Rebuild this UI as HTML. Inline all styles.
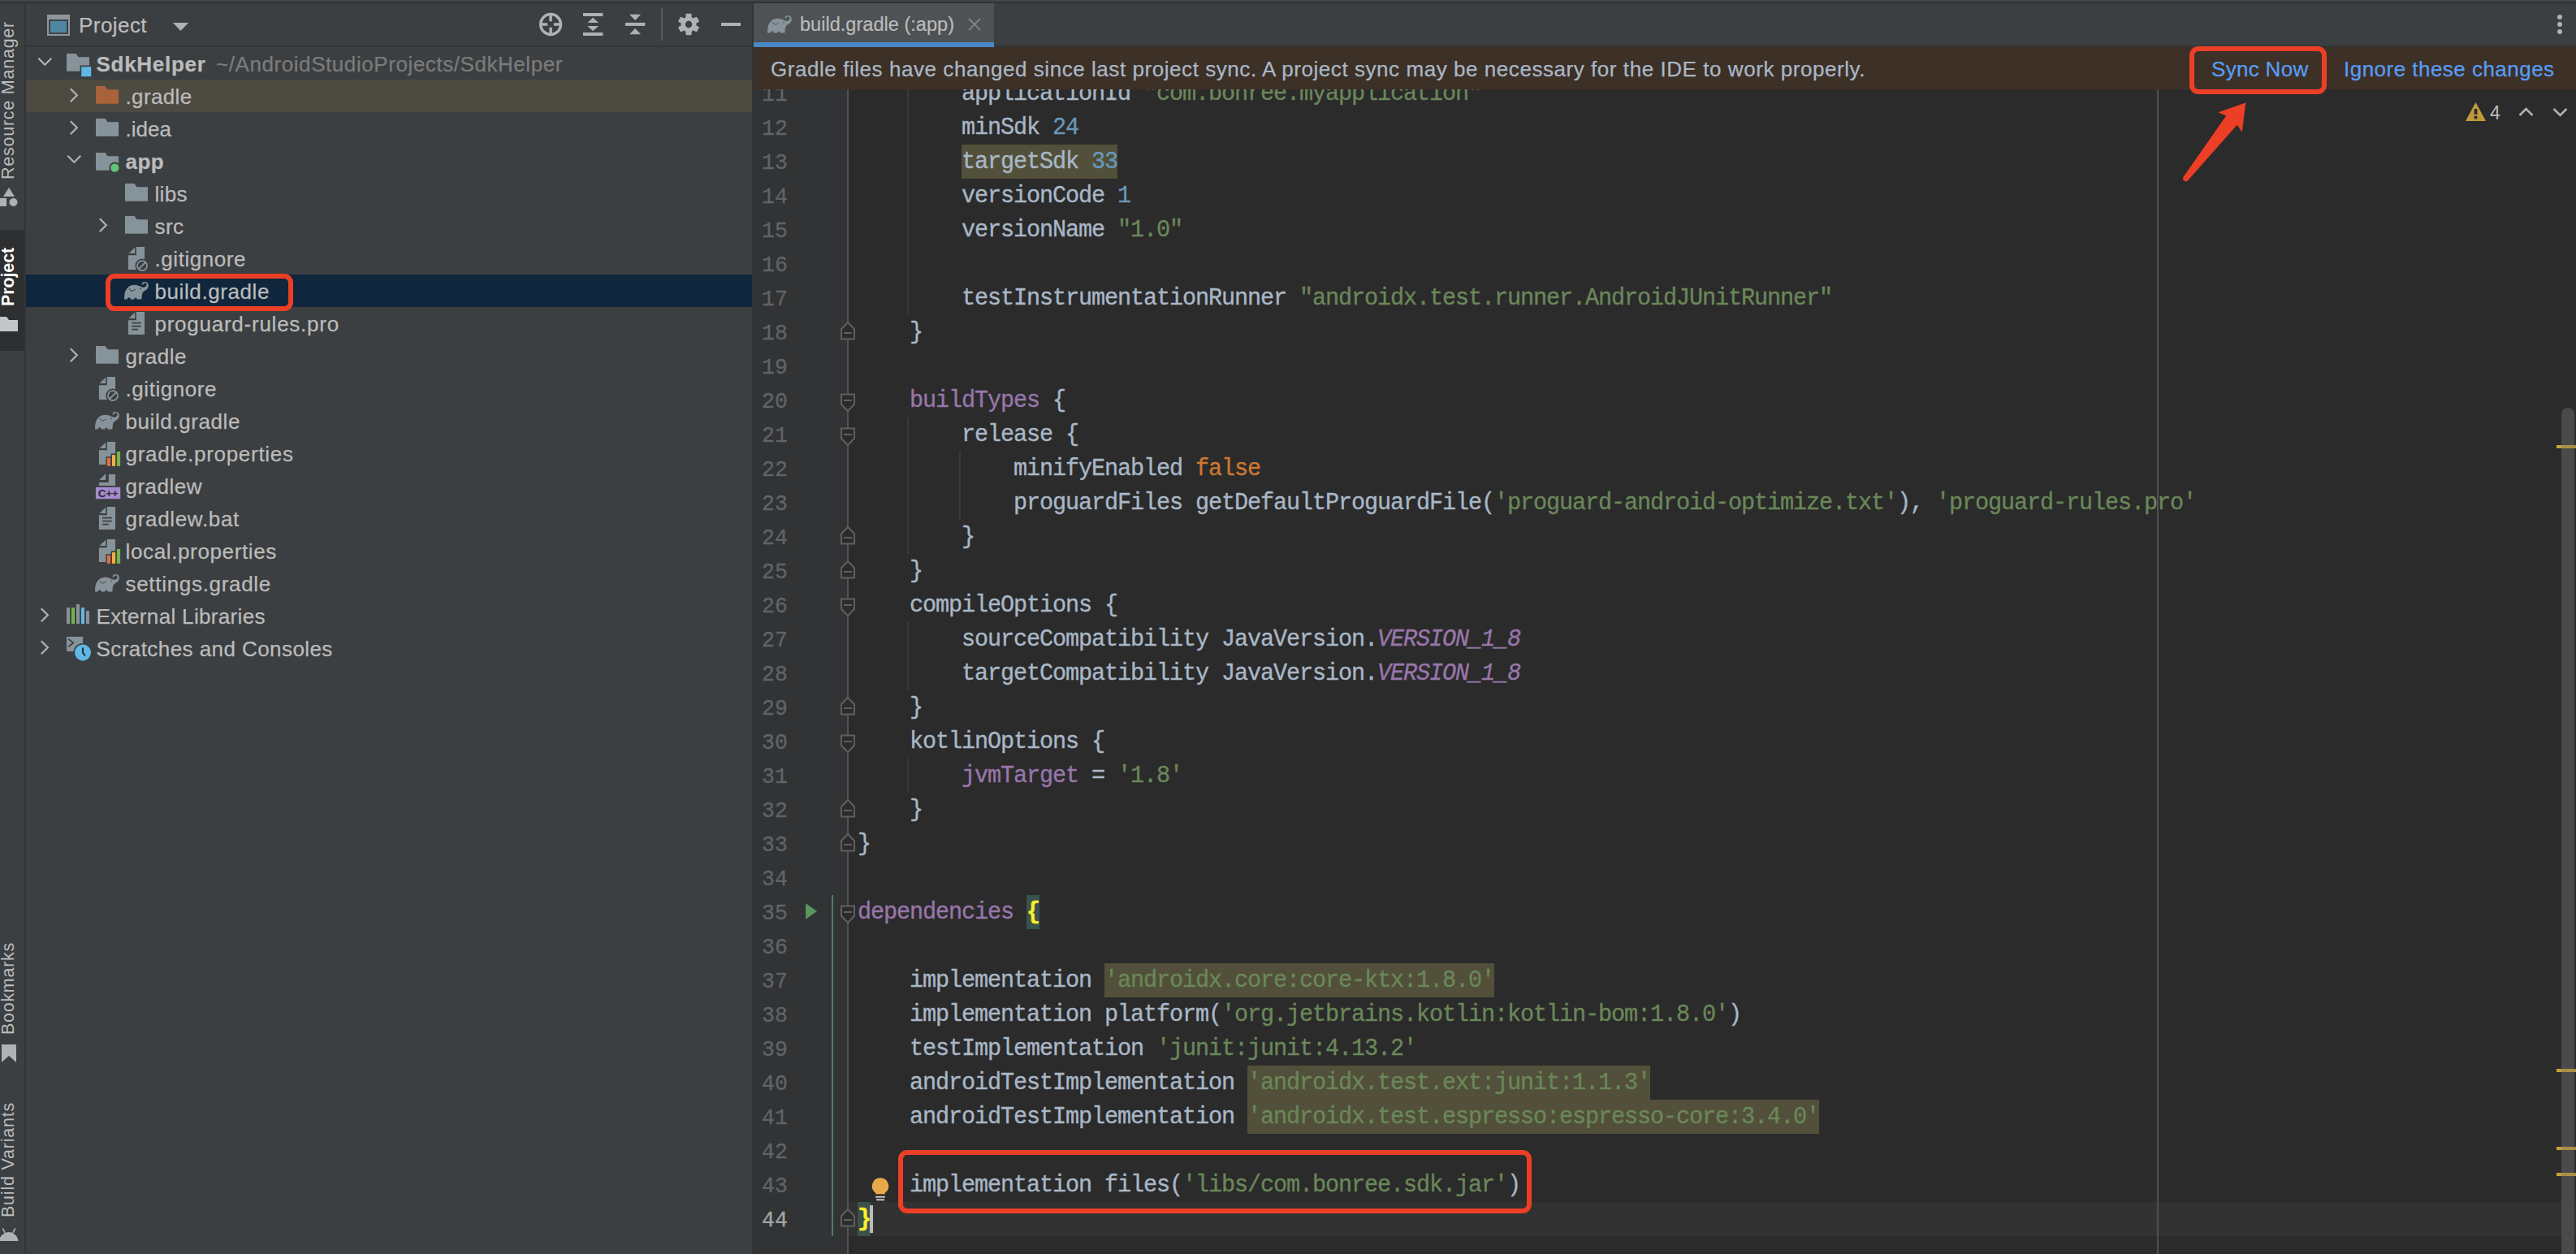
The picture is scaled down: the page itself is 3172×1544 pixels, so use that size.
<!DOCTYPE html><html><head><meta charset="utf-8"><title>build.gradle</title>
<style>
html,body{margin:0;padding:0}
body{width:3172px;height:1544px;position:relative;overflow:hidden;background:#3c3f41;font-family:"Liberation Sans",sans-serif;font-size:26px;color:#bbbbbb}
.a{position:absolute}
svg{display:block}
#topline{left:0;top:0;width:3172px;height:2px;background:#434547}
#topline2{left:0;top:2px;width:3172px;height:2px;background:#2f3133}
/* left strip */
#strip{left:0;top:3px;width:30px;height:1541px;background:#3c3f41}
#stripb{left:30px;top:3px;width:2px;height:1541px;background:#323436}
.vt{position:absolute;left:0;width:30px;white-space:nowrap;font-size:21.500px;color:#bbbbbb}
.vt span{position:absolute;left:-5px;top:0;transform-origin:0 0;transform:rotate(-90deg);line-height:30px;height:30px;display:block}
/* project panel */
#panel{left:32px;top:3px;width:894px;height:1541px;background:#3c3f41}
#phead{left:32px;top:3px;width:894px;height:53px}
#pheadb{left:32px;top:56px;width:894px;height:2px;background:#323436}
.row{position:absolute;left:32px;width:894px;height:40px}
.row.excl{background:#4c4a41}
.row.sel{background:#10263c}
.row .tx{top:1px;line-height:40px;white-space:nowrap;color:#bbbbbb;-webkit-text-stroke:0.250px currentColor}
.row .tx.b{font-weight:bold}
.row .tx.g{color:#7b7b7b}
.row .icw{top:0;height:40px;width:28px;display:flex;align-items:center;justify-content:flex-start}
.ic{flex:none}
/* divider */
#divider{left:926px;top:3px;width:2px;height:1541px;background:#323436}
/* editor */
#tabbar{left:928px;top:3px;width:2244px;height:53px;background:#3c3f41}
#tabbarb{left:928px;top:56px;width:2244px;height:2px;background:#323436}
#tab{left:928px;top:3px;width:296px;height:49px;background:#4e5254}
#tabu{left:928px;top:52px;width:296px;height:6px;background:#4a88c7}
#tabtx{left:985px;top:5px;line-height:50px;font-size:23.500px;white-space:nowrap;color:#bbbbbb;-webkit-text-stroke:0.200px currentColor}
#editor{left:928px;top:58px;width:2244px;height:1486px;background:#2b2b2b;overflow:hidden}
#gutter{left:928px;top:58px;width:116px;height:1486px;background:#313335}
#foldline{left:1043px;top:58px;width:2px;height:1486px;background:#525252}
#curline{left:1045px;top:1480px;width:2127px;height:42px;background:#323232}
#vcs{left:1024px;top:1102px;width:2px;height:420px;background:#52796b}
#margin{left:2656px;top:110px;width:2px;height:1434px;background:#4f4f4f}
.ln{position:absolute;left:928px;width:42px;height:42px;line-height:42px;text-align:right;font-family:"Liberation Mono",monospace;font-size:26.500px;letter-spacing:0.100px;color:#606366;white-space:pre;transform-origin:0 28px;transform:translateY(2.400px) scaleY(1.05);-webkit-text-stroke:0.350px currentColor}
.ln.cur{color:#a4a3a3}
.cl{position:absolute;left:1056px;height:42px;line-height:42px;font-family:"Liberation Mono",monospace;font-size:28.500px;letter-spacing:-1.103px;color:#a9b7c6;white-space:pre;transform-origin:0 28.600px;transform:translateY(1.400px) scaleY(1.05);-webkit-text-stroke:0.350px currentColor}
.s{color:#6a8759}.n{color:#6897bb}.k{color:#cc7832}.p{color:#9876aa}.pi{color:#9876aa;font-style:italic}
.y{color:#ffef28;font-weight:bold}
.yb{position:absolute;height:42px;background:#3b514d}
.hlb{position:absolute;height:42px;background:#52503a}
.guide{position:absolute;width:2px;background:#393939}
#notif{left:928px;top:58px;width:2244px;height:52px;background:#3d3026}
#notiftx{left:949px;top:59px;line-height:52px;white-space:nowrap;color:#a9b7c6;-webkit-text-stroke:0.250px currentColor}
.link{color:#589df6;white-space:nowrap;line-height:52px;top:59px;-webkit-text-stroke:0.250px currentColor}
.redbox{position:absolute;border:6px solid #ec3f25;border-radius:11px;box-sizing:border-box}
#scroll{left:3154px;top:502px;width:16px;height:1060px;border-radius:8px;background:#4a4a4a}
.mark{position:absolute;left:3148px;width:24px;height:4px;background:#a68f47}
.mark i{position:absolute;left:0;top:0;width:6px;height:4px;background:#c9a136}
#warn4{left:3066px;top:124px;font-size:23px;line-height:30px;color:#bbbbbb}

</style></head>
<body>
<div class="a" id="panel"></div>
<div class="a" id="phead"></div>
<div class="a" id="pheadb"></div>
<div class="row" style="top:58px">
<svg class="a" style="left:14.4px;top:11.500px" width="19" height="12" viewBox="0 0 19 12"><path d="M1.300 1.800l8 8 8-8" stroke="#b1b1b1" stroke-width="2.200" fill="none"></path></svg>
<svg class="a" style="left:50px;top:8px" width="31" height="29" viewBox="0 0 31 29"><path d="M0 0H11.5L14.6 4.3H28V14.5H16.500V21.700H0z" fill="#87939a"></path><rect x="18.200" y="16.200" width="12" height="12" fill="#5fb8e6"></rect></svg>
<span class="a tx b" style="left: 86.5px; letter-spacing: 0.71px;">SdkHelper</span>
<span class="a tx g" style="left: 234px; letter-spacing: 0.567px;">~/AndroidStudioProjects/SdkHelper</span>
</div>
<div class="row excl" style="top:98px">
<svg class="a" style="left:53px;top:9.500px" width="12" height="19" viewBox="0 0 12 19"><path d="M1.800 1.300l8 8-8 8" stroke="#b1b1b1" stroke-width="2.200" fill="none"></path></svg>
<svg class="a" style="left:86px;top:8.4px" width="28" height="22" viewBox="0 0 28 22"><path d="M0 0H11.5L14.6 4.3H28V21.700H0z" fill="#a9623a"></path></svg>
<span class="a tx" style="left: 122.5px; letter-spacing: 0.357px;">.gradle</span>
</div>
<div class="row" style="top:138px">
<svg class="a" style="left:53px;top:9.500px" width="12" height="19" viewBox="0 0 12 19"><path d="M1.800 1.300l8 8-8 8" stroke="#b1b1b1" stroke-width="2.200" fill="none"></path></svg>
<svg class="a" style="left:86px;top:8.4px" width="28" height="22" viewBox="0 0 28 22"><path d="M0 0H11.5L14.6 4.3H28V21.700H0z" fill="#87939a"></path></svg>
<span class="a tx" style="left: 122.5px; letter-spacing: 0.022px;">.idea</span>
</div>
<div class="row" style="top:178px">
<svg class="a" style="left:50.4px;top:11.500px" width="19" height="12" viewBox="0 0 19 12"><path d="M1.300 1.800l8 8 8-8" stroke="#b1b1b1" stroke-width="2.200" fill="none"></path></svg>
<svg class="a" style="left:85.8px;top:10.2px" width="31" height="27" viewBox="0 0 31 27"><path d="M0 0H11.5L14.6 4.3H28V21.700H0z" fill="#87939a"></path><circle cx="23.300" cy="18.600" r="7" fill="#3c3f41"></circle><circle cx="23.300" cy="18.600" r="5.200" fill="#62c277"></circle></svg>
<span class="a tx b" style="left: 122.5px; letter-spacing: 0.422px;">app</span>
</div>
<div class="row" style="top:218px">
<svg class="a" style="left:122px;top:8.4px" width="28" height="22" viewBox="0 0 28 22"><path d="M0 0H11.5L14.6 4.3H28V21.700H0z" fill="#87939a"></path></svg>
<span class="a tx" style="left: 158.5px; letter-spacing: 0.346px;">libs</span>
</div>
<div class="row" style="top:258px">
<svg class="a" style="left:89px;top:9.500px" width="12" height="19" viewBox="0 0 12 19"><path d="M1.800 1.300l8 8-8 8" stroke="#b1b1b1" stroke-width="2.200" fill="none"></path></svg>
<svg class="a" style="left:122px;top:8.4px" width="28" height="22" viewBox="0 0 28 22"><path d="M0 0H11.5L14.6 4.3H28V21.700H0z" fill="#87939a"></path></svg>
<span class="a tx" style="left: 158.5px; letter-spacing: 0.443px;">src</span>
</div>
<div class="row" style="top:298px">
<svg class="a" style="left:122px;top:5px" width="31" height="34" viewBox="0 0 31 34"><path d="M13.8 1.1H24V28.9H3.9V11.2H13.8z" fill="#87939a"></path><path d="M12.1 1.700V9H4.500z" fill="#87939a"></path><circle cx="21" cy="24.100" r="8.600" fill="#3c3f41"></circle><circle cx="21" cy="24.100" r="6" fill="none" stroke="#87939a" stroke-width="1.800"></circle><path d="M16.900 28.200L25.100 20" stroke="#87939a" stroke-width="1.800"></path></svg>
<span class="a tx" style="left: 158.5px; letter-spacing: 0.563px;">.gitignore</span>
</div>
<div class="row sel" style="top:338px">
<svg class="a" style="left:121.1px;top:8.8px" width="31" height="23" viewBox="0 0 31 23"><path d="M0 21.6Q0 15.8 0.7 13.4Q1.4 11 2.85 8.85Q4.3 6.7 6.2 5.5Q8.1 4.3 10.3 3.9Q12.5 3.5 14.85 3.9Q17.2 4.3 18.9 5.15Q20.6 6 22.25 6.45Q23.9 6.9 25.2 6.45Q26.5 6 27.15 5.05Q27.8 4.1 27.55 3.15Q27.3 2.2 26.45 1.7Q25.6 1.2 24.75 1.45Q23.9 1.7 23.6 2.45Q23.3 3.2 22.8 3.55Q22.3 3.9 21.8 3.35Q21.3 2.8 21.75 1.8Q22.2 0.8 23.55 0.3Q24.9 -0.2 26.5 0.15Q28.1 0.5 29 1.85Q29.9 3.2 29.8 4.95Q29.7 6.7 28.6 8.3Q27.5 9.9 25.7 10.85Q23.9 11.8 23.1 12.85Q22.3 13.9 21.95 15.8Q21.6 17.7 21.5 19.65L21.4 21.6H15.6A1.6 2 0 0 0 12.4 21.6H7.7A1.95 2.400 0 0 0 3.8 21.6Z" fill="#87939a"></path><circle cx="19.9" cy="8.6" r=".75" fill="#10263c"></circle><path d="M6.2 8.1Q7.6 11.8 9.6 11.2T13.7 9.100" stroke="#10263c" stroke-width=".9" fill="none"></path></svg>
<span class="a tx" style="left: 158.5px; letter-spacing: 0.589px;">build.gradle</span>
</div>
<div class="row" style="top:378px">
<svg class="a" style="left:122px;top:5px" width="28" height="30" viewBox="0 0 28 30"><path d="M13.8 1.1H24V28.9H3.9V11.2H13.8z" fill="#87939a"></path><path d="M12.1 1.700V9H4.500z" fill="#87939a"></path><path d="M8.200 14.700H19.700M8.200 18.700H19.700M8.200 22.700H15.900" stroke="#3c3f41" stroke-width="1.700"></path></svg>
<span class="a tx" style="left: 158.5px; letter-spacing: 0.751px;">proguard-rules.pro</span>
</div>
<div class="row" style="top:418px">
<svg class="a" style="left:53px;top:9.500px" width="12" height="19" viewBox="0 0 12 19"><path d="M1.800 1.300l8 8-8 8" stroke="#b1b1b1" stroke-width="2.200" fill="none"></path></svg>
<svg class="a" style="left:86px;top:8.4px" width="28" height="22" viewBox="0 0 28 22"><path d="M0 0H11.5L14.6 4.3H28V21.700H0z" fill="#87939a"></path></svg>
<span class="a tx" style="left: 122.5px; letter-spacing: 0.536px;">gradle</span>
</div>
<div class="row" style="top:458px">
<svg class="a" style="left:86px;top:5px" width="31" height="34" viewBox="0 0 31 34"><path d="M13.8 1.1H24V28.9H3.9V11.2H13.8z" fill="#87939a"></path><path d="M12.1 1.700V9H4.500z" fill="#87939a"></path><circle cx="21" cy="24.100" r="8.600" fill="#3c3f41"></circle><circle cx="21" cy="24.100" r="6" fill="none" stroke="#87939a" stroke-width="1.800"></circle><path d="M16.900 28.200L25.100 20" stroke="#87939a" stroke-width="1.800"></path></svg>
<span class="a tx" style="left: 122.5px; letter-spacing: 0.563px;">.gitignore</span>
</div>
<div class="row" style="top:498px">
<svg class="a" style="left:85.1px;top:8.8px" width="31" height="23" viewBox="0 0 31 23"><path d="M0 21.6Q0 15.8 0.7 13.4Q1.4 11 2.85 8.85Q4.3 6.7 6.2 5.5Q8.1 4.3 10.3 3.9Q12.5 3.5 14.85 3.9Q17.2 4.3 18.9 5.15Q20.6 6 22.25 6.45Q23.9 6.9 25.2 6.45Q26.5 6 27.15 5.05Q27.8 4.1 27.55 3.15Q27.3 2.2 26.45 1.7Q25.6 1.2 24.75 1.45Q23.9 1.7 23.6 2.45Q23.3 3.2 22.8 3.55Q22.3 3.9 21.8 3.35Q21.3 2.8 21.75 1.8Q22.2 0.8 23.55 0.3Q24.9 -0.2 26.5 0.15Q28.1 0.5 29 1.85Q29.9 3.2 29.8 4.95Q29.7 6.7 28.6 8.3Q27.5 9.9 25.7 10.85Q23.9 11.8 23.1 12.85Q22.3 13.9 21.95 15.8Q21.6 17.7 21.5 19.65L21.4 21.6H15.6A1.6 2 0 0 0 12.4 21.6H7.7A1.95 2.400 0 0 0 3.8 21.6Z" fill="#87939a"></path><circle cx="19.9" cy="8.6" r=".75" fill="#3c3f41"></circle><path d="M6.2 8.1Q7.6 11.8 9.6 11.2T13.7 9.100" stroke="#3c3f41" stroke-width=".9" fill="none"></path></svg>
<span class="a tx" style="left: 122.5px; letter-spacing: 0.589px;">build.gradle</span>
</div>
<div class="row" style="top:538px">
<svg class="a" style="left:86px;top:5px" width="31" height="32" viewBox="0 0 31 32"><path d="M13.8 1.1H24V15.500H18.500V19.300H12.300V28.900H3.900V11.2H13.8z" fill="#87939a"></path><path d="M12.1 1.700V9H4.500z" fill="#87939a"></path><path d="M12.300 28.900V19.300H18.500V15.500H24V13.500" fill="none"></path><rect x="12.300" y="19" width="6" height="10" fill="#87939a" opacity="0"></rect><rect x="13.800" y="20.800" width="4.300" height="10.100" fill="#e0703a"></rect><rect x="20" y="17.100" width="4.100" height="13.800" fill="#eeb04a"></rect><rect x="25.900" y="13" width="4.200" height="17.900" fill="#72b54c"></rect></svg>
<span class="a tx" style="left: 122.5px; letter-spacing: 0.71px;">gradle.properties</span>
</div>
<div class="row" style="top:578px">
<svg class="a" style="left:88px;top:5.8px" width="34" height="31" viewBox="0 0 34 31" overflow="visible"><path d="M13.800 0H22V14H2.100V10H13.800z" fill="#87939a"></path><path d="M12.100 .5V8.300H4.300z" fill="#87939a" transform="translate(-2 -1.200)"></path><rect x="-2.100" y="15.900" width="30.300" height="14.300" fill="#a48bd0"></rect><text x="13" y="27.600" font-family="Liberation Sans" font-weight="bold" font-size="13.500" fill="#2b2b2b" text-anchor="middle" letter-spacing="-.3">C++</text></svg>
<span class="a tx" style="left: 122.5px; letter-spacing: 0.491px;">gradlew</span>
</div>
<div class="row" style="top:618px">
<svg class="a" style="left:86px;top:5px" width="28" height="30" viewBox="0 0 28 30"><path d="M13.8 1.1H24V28.9H3.9V11.2H13.8z" fill="#87939a"></path><path d="M12.1 1.700V9H4.500z" fill="#87939a"></path><path d="M8.200 14.700H19.700M8.200 18.700H19.700M8.200 22.700H15.900" stroke="#3c3f41" stroke-width="1.700"></path></svg>
<span class="a tx" style="left: 122.5px; letter-spacing: 0.683px;">gradlew.bat</span>
</div>
<div class="row" style="top:658px">
<svg class="a" style="left:86px;top:5px" width="31" height="32" viewBox="0 0 31 32"><path d="M13.8 1.1H24V15.500H18.500V19.300H12.300V28.900H3.900V11.2H13.8z" fill="#87939a"></path><path d="M12.1 1.700V9H4.500z" fill="#87939a"></path><path d="M12.300 28.900V19.300H18.500V15.500H24V13.500" fill="none"></path><rect x="12.300" y="19" width="6" height="10" fill="#87939a" opacity="0"></rect><rect x="13.800" y="20.800" width="4.300" height="10.100" fill="#e0703a"></rect><rect x="20" y="17.100" width="4.100" height="13.800" fill="#eeb04a"></rect><rect x="25.900" y="13" width="4.200" height="17.900" fill="#72b54c"></rect></svg>
<span class="a tx" style="left: 122.5px; letter-spacing: 0.637px;">local.properties</span>
</div>
<div class="row" style="top:698px">
<svg class="a" style="left:85.1px;top:8.8px" width="31" height="23" viewBox="0 0 31 23"><path d="M0 21.6Q0 15.8 0.7 13.4Q1.4 11 2.85 8.85Q4.3 6.7 6.2 5.5Q8.1 4.3 10.3 3.9Q12.5 3.5 14.85 3.9Q17.2 4.3 18.9 5.15Q20.6 6 22.25 6.45Q23.9 6.9 25.2 6.45Q26.5 6 27.15 5.05Q27.8 4.1 27.55 3.15Q27.3 2.2 26.45 1.7Q25.6 1.2 24.75 1.45Q23.9 1.7 23.6 2.45Q23.3 3.2 22.8 3.55Q22.3 3.9 21.8 3.35Q21.3 2.8 21.75 1.8Q22.2 0.8 23.55 0.3Q24.9 -0.2 26.5 0.15Q28.1 0.5 29 1.85Q29.9 3.2 29.8 4.95Q29.7 6.7 28.6 8.3Q27.5 9.9 25.7 10.85Q23.9 11.8 23.1 12.85Q22.3 13.9 21.95 15.8Q21.6 17.7 21.5 19.65L21.4 21.6H15.6A1.6 2 0 0 0 12.4 21.6H7.7A1.95 2.400 0 0 0 3.8 21.6Z" fill="#87939a"></path><circle cx="19.9" cy="8.6" r=".75" fill="#3c3f41"></circle><path d="M6.2 8.1Q7.6 11.8 9.6 11.2T13.7 9.100" stroke="#3c3f41" stroke-width=".9" fill="none"></path></svg>
<span class="a tx" style="left: 122.5px; letter-spacing: 0.693px;">settings.gradle</span>
</div>
<div class="row" style="top:738px">
<svg class="a" style="left:17px;top:9.500px" width="12" height="19" viewBox="0 0 12 19"><path d="M1.800 1.300l8 8-8 8" stroke="#b1b1b1" stroke-width="2.200" fill="none"></path></svg>
<svg class="a" style="left:50px;top:5.9px" width="28" height="24" viewBox="0 0 28 24"><rect x="0" y="4.200" width="4" height="19.800" fill="#87939a"></rect><rect x="5.900" y="4.200" width="4.100" height="19.800" fill="#72b54c"></rect><rect x="12" y="0" width="4" height="24" fill="#87939a"></rect><rect x="17.900" y="4.200" width="4.100" height="19.800" fill="#5fb8e6"></rect><rect x="24" y="8.100" width="4" height="15.900" fill="#87939a"></rect></svg>
<span class="a tx" style="left: 86.5px; letter-spacing: 0.333px;">External Libraries</span>
</div>
<div class="row" style="top:778px">
<svg class="a" style="left:17px;top:9.500px" width="12" height="19" viewBox="0 0 12 19"><path d="M1.800 1.300l8 8-8 8" stroke="#b1b1b1" stroke-width="2.200" fill="none"></path></svg>
<svg class="a" style="left:50px;top:6px" width="32" height="31" viewBox="0 0 32 31"><rect x="0" y="0" width="20.100" height="18" fill="#87939a"></rect><path d="M2.200 2.600L8.300 7.500L2.200 12.400" stroke="#3c3f41" stroke-width="1.700" fill="none"></path><circle cx="20" cy="19.500" r="11.600" fill="#3c3f41"></circle><circle cx="20" cy="19.500" r="10" fill="#5fb8e6"></circle><path d="M20 13.500V19.500L22.800 23.500" stroke="#2b2b2b" stroke-width="2" fill="none"></path></svg>
<span class="a tx" style="left: 86.5px; letter-spacing: 0.431px;">Scratches and Consoles</span>
</div>
<div class="a" id="strip"></div>
<div class="a" id="stripb"></div>
<div class="a" id="divider"></div>
<div class="a" id="tabbar"></div>
<div class="a" id="editor"></div>
<div class="a" id="gutter"></div>
<div class="a" id="curline"></div>
<div class="a" id="foldline"></div>
<div class="a" id="vcs"></div>
<div class="a" id="margin"></div>
<div class="guide" style="left:1117px;top:94px;height:294px"></div><div class="guide" style="left:1117px;top:514px;height:168px"></div><div class="guide" style="left:1181px;top:556px;height:84px"></div><div class="guide" style="left:1117px;top:766px;height:84px"></div><div class="guide" style="left:1117px;top:934px;height:42px"></div>
<div class="hlb" style="left:1184px;top:178px;width:192px"></div>
<div class="yb" style="left:1264px;top:1102px;width:16px"></div>
<div class="hlb" style="left:1360px;top:1186px;width:480px"></div>
<div class="hlb" style="left:1536px;top:1312px;width:496px"></div>
<div class="hlb" style="left:1536px;top:1354px;width:704px"></div>
<div class="yb" style="left:1056px;top:1480px;width:16px"></div>
<div class="ln" style="top:94px">11</div>
<div class="cl" style="top:94px">        applicationId <span class="s">"com.bonree.myapplication"</span></div>
<div class="ln" style="top:136px">12</div>
<div class="cl" style="top:136px">        minSdk <span class="n">24</span></div>
<div class="ln" style="top:178px">13</div>
<div class="cl" style="top:178px">        targetSdk <span class="n">33</span></div>
<div class="ln" style="top:220px">14</div>
<div class="cl" style="top:220px">        versionCode <span class="n">1</span></div>
<div class="ln" style="top:262px">15</div>
<div class="cl" style="top:262px">        versionName <span class="s">"1.0"</span></div>
<div class="ln" style="top:304px">16</div>
<div class="cl" style="top:304px"></div>
<div class="ln" style="top:346px">17</div>
<div class="cl" style="top:346px">        testInstrumentationRunner <span class="s">"androidx.test.runner.AndroidJUnitRunner"</span></div>
<div class="ln" style="top:388px">18</div>
<div class="cl" style="top:388px">    }</div>
<div class="ln" style="top:430px">19</div>
<div class="cl" style="top:430px"></div>
<div class="ln" style="top:472px">20</div>
<div class="cl" style="top:472px">    <span class="p">buildTypes</span> {</div>
<div class="ln" style="top:514px">21</div>
<div class="cl" style="top:514px">        release {</div>
<div class="ln" style="top:556px">22</div>
<div class="cl" style="top:556px">            minifyEnabled <span class="k">false</span></div>
<div class="ln" style="top:598px">23</div>
<div class="cl" style="top:598px">            proguardFiles getDefaultProguardFile(<span class="s">'proguard-android-optimize.txt'</span>), <span class="s">'proguard-rules.pro'</span></div>
<div class="ln" style="top:640px">24</div>
<div class="cl" style="top:640px">        }</div>
<div class="ln" style="top:682px">25</div>
<div class="cl" style="top:682px">    }</div>
<div class="ln" style="top:724px">26</div>
<div class="cl" style="top:724px">    compileOptions {</div>
<div class="ln" style="top:766px">27</div>
<div class="cl" style="top:766px">        sourceCompatibility JavaVersion.<span class="pi">VERSION_1_8</span></div>
<div class="ln" style="top:808px">28</div>
<div class="cl" style="top:808px">        targetCompatibility JavaVersion.<span class="pi">VERSION_1_8</span></div>
<div class="ln" style="top:850px">29</div>
<div class="cl" style="top:850px">    }</div>
<div class="ln" style="top:892px">30</div>
<div class="cl" style="top:892px">    kotlinOptions {</div>
<div class="ln" style="top:934px">31</div>
<div class="cl" style="top:934px">        <span class="p">jvmTarget</span> = <span class="s">'1.8'</span></div>
<div class="ln" style="top:976px">32</div>
<div class="cl" style="top:976px">    }</div>
<div class="ln" style="top:1018px">33</div>
<div class="cl" style="top:1018px">}</div>
<div class="ln" style="top:1060px">34</div>
<div class="cl" style="top:1060px"></div>
<div class="ln" style="top:1102px">35</div>
<div class="cl" style="top:1102px"><span class="p">dependencies</span> <span class="y">{</span></div>
<div class="ln" style="top:1144px">36</div>
<div class="cl" style="top:1144px"></div>
<div class="ln" style="top:1186px">37</div>
<div class="cl" style="top:1186px">    implementation <span class="s">'androidx.core:core-ktx:1.8.0'</span></div>
<div class="ln" style="top:1228px">38</div>
<div class="cl" style="top:1228px">    implementation platform(<span class="s">'org.jetbrains.kotlin:kotlin-bom:1.8.0'</span>)</div>
<div class="ln" style="top:1270px">39</div>
<div class="cl" style="top:1270px">    testImplementation <span class="s">'junit:junit:4.13.2'</span></div>
<div class="ln" style="top:1312px">40</div>
<div class="cl" style="top:1312px">    androidTestImplementation <span class="s">'androidx.test.ext:junit:1.1.3'</span></div>
<div class="ln" style="top:1354px">41</div>
<div class="cl" style="top:1354px">    androidTestImplementation <span class="s">'androidx.test.espresso:espresso-core:3.4.0'</span></div>
<div class="ln" style="top:1396px">42</div>
<div class="cl" style="top:1396px"></div>
<div class="ln" style="top:1438px">43</div>
<div class="cl" style="top:1438px">    implementation files(<span class="s">'libs/com.bonree.sdk.jar'</span>)</div>
<div class="ln cur" style="top:1480px">44</div>
<div class="cl" style="top:1480px"><span class="y">}</span></div>
<svg class="a" style="left:1034px;top:395px" width="20" height="24" viewBox="0 0 20 24"><path d="M2 22.500v-12.300l8-8.200 8 8.200v12.300z" fill="#2b2b2b" stroke="#5f5f5f" stroke-width="2"></path><path d="M5 15h10" stroke="#5f5f5f" stroke-width="2"></path></svg><svg class="a" style="left:1034px;top:647px" width="20" height="24" viewBox="0 0 20 24"><path d="M2 22.500v-12.300l8-8.200 8 8.200v12.300z" fill="#2b2b2b" stroke="#5f5f5f" stroke-width="2"></path><path d="M5 15h10" stroke="#5f5f5f" stroke-width="2"></path></svg><svg class="a" style="left:1034px;top:689px" width="20" height="24" viewBox="0 0 20 24"><path d="M2 22.500v-12.300l8-8.200 8 8.200v12.300z" fill="#2b2b2b" stroke="#5f5f5f" stroke-width="2"></path><path d="M5 15h10" stroke="#5f5f5f" stroke-width="2"></path></svg><svg class="a" style="left:1034px;top:857px" width="20" height="24" viewBox="0 0 20 24"><path d="M2 22.500v-12.300l8-8.200 8 8.200v12.300z" fill="#2b2b2b" stroke="#5f5f5f" stroke-width="2"></path><path d="M5 15h10" stroke="#5f5f5f" stroke-width="2"></path></svg><svg class="a" style="left:1034px;top:983px" width="20" height="24" viewBox="0 0 20 24"><path d="M2 22.500v-12.300l8-8.200 8 8.200v12.300z" fill="#2b2b2b" stroke="#5f5f5f" stroke-width="2"></path><path d="M5 15h10" stroke="#5f5f5f" stroke-width="2"></path></svg><svg class="a" style="left:1034px;top:1025px" width="20" height="24" viewBox="0 0 20 24"><path d="M2 22.500v-12.300l8-8.200 8 8.200v12.300z" fill="#2b2b2b" stroke="#5f5f5f" stroke-width="2"></path><path d="M5 15h10" stroke="#5f5f5f" stroke-width="2"></path></svg><svg class="a" style="left:1034px;top:1487px" width="20" height="24" viewBox="0 0 20 24"><path d="M2 22.500v-12.300l8-8.200 8 8.200v12.300z" fill="#2b2b2b" stroke="#5f5f5f" stroke-width="2"></path><path d="M5 15h10" stroke="#5f5f5f" stroke-width="2"></path></svg><svg class="a" style="left:1034px;top:484px" width="20" height="24" viewBox="0 0 20 24"><path d="M2 1.500v12.300l8 8.200 8-8.200v-12.300z" fill="#2b2b2b" stroke="#5f5f5f" stroke-width="2"></path><path d="M5 9h10" stroke="#5f5f5f" stroke-width="2"></path></svg><svg class="a" style="left:1034px;top:526px" width="20" height="24" viewBox="0 0 20 24"><path d="M2 1.500v12.300l8 8.200 8-8.200v-12.300z" fill="#2b2b2b" stroke="#5f5f5f" stroke-width="2"></path><path d="M5 9h10" stroke="#5f5f5f" stroke-width="2"></path></svg><svg class="a" style="left:1034px;top:736px" width="20" height="24" viewBox="0 0 20 24"><path d="M2 1.500v12.300l8 8.200 8-8.200v-12.300z" fill="#2b2b2b" stroke="#5f5f5f" stroke-width="2"></path><path d="M5 9h10" stroke="#5f5f5f" stroke-width="2"></path></svg><svg class="a" style="left:1034px;top:904px" width="20" height="24" viewBox="0 0 20 24"><path d="M2 1.500v12.300l8 8.200 8-8.200v-12.300z" fill="#2b2b2b" stroke="#5f5f5f" stroke-width="2"></path><path d="M5 9h10" stroke="#5f5f5f" stroke-width="2"></path></svg><svg class="a" style="left:1034px;top:1114px" width="20" height="24" viewBox="0 0 20 24"><path d="M2 1.500v12.300l8 8.200 8-8.200v-12.300z" fill="#2b2b2b" stroke="#5f5f5f" stroke-width="2"></path><path d="M5 9h10" stroke="#5f5f5f" stroke-width="2"></path></svg>
<div class="a" id="notif"></div>
<div class="a tx" id="notiftx" style="letter-spacing: 0.556px;">Gradle files have changed since last project sync. A project sync may be necessary for the IDE to work properly.</div>
<div class="a link" style="left: 2723px; letter-spacing: 0.319px;">Sync Now</div>
<div class="a link" style="left: 2886px; letter-spacing: 0.476px;">Ignore these changes</div>
<div class="a" id="tabbarb"></div>
<div class="a" id="tab"></div>
<div class="a" id="tabu"></div>
<div class="a" id="tabtx" style="letter-spacing: 0.03px;">build.gradle (:app)</div>
<div class="a" id="scroll"></div>
<div class="mark" style="top:548px"><i></i></div>
<div class="mark" style="top:1316px"><i></i></div>
<div class="mark" style="top:1412px"><i></i></div>
<div class="mark" style="top:1444px"><i></i></div>
<div class="a" id="warn4">4</div>
<div class="redbox" style="left:2696px;top:57px;width:169px;height:59px"></div>
<div class="redbox" style="left:1106px;top:1416px;width:780px;height:78px"></div>
<div class="redbox" style="left:130px;top:337px;width:231px;height:46px"></div>

<!-- project header -->
<svg class="a" style="left:58px;top:18px" width="28" height="26" viewBox="0 0 28 26"><rect x="0" y="0" width="28.200" height="26.100" fill="#8d979e"></rect><rect x="2.100" y="6" width="23.900" height="17.900" fill="#3c3f41"></rect><rect x="4" y="7.900" width="20.100" height="14.200" fill="#4f87a3"></rect></svg>
<div class="a" id="ptitle" style="left: 97px; top: 4px; -webkit-text-stroke: 0.25px currentcolor; line-height: 54px; white-space: nowrap; letter-spacing: 0.44px;">Project</div>
<svg class="a" style="left:213px;top:28px" width="19" height="10" viewBox="0 0 19 10"><path d="M0 0h19l-9.500 10z" fill="#afb1b3"></path></svg>
<svg class="a" style="left:663px;top:15px" width="30" height="30" viewBox="0 0 30 30"><circle cx="15.100" cy="15" r="12.400" fill="none" stroke="#afb1b3" stroke-width="3.500"></circle><path d="M15.100 2v9.300M15.100 18.700v9.300M2 15h9.300M18.900 15h9.300" stroke="#afb1b3" stroke-width="3.500"></path></svg>
<svg class="a" style="left:717px;top:15px" width="26" height="30" viewBox="0 0 26 30"><path d="M1 3h24.300M1 27h24.300" stroke="#afb1b3" stroke-width="4"></path><path d="M13.200 6.800l6.800 6.200h-13.600zM13.200 23.200l6.800-6.200h-13.600z" fill="#afb1b3"></path></svg>
<svg class="a" style="left:769px;top:15px" width="26" height="30" viewBox="0 0 26 30"><path d="M1 14.900h24.300" stroke="#afb1b3" stroke-width="4"></path><path d="M13.100 10.100l7-7.300h-14zM13.100 19.900l7 7.300h-14z" fill="#afb1b3"></path></svg>
<div class="a" style="left:814px;top:10px;width:2px;height:40px;background:#555758"></div>
<svg class="a" style="left:833px;top:15px" width="30" height="30" viewBox="-15 -15 30 30"><g fill="#afb1b3"><circle r="9.500"></circle><rect x="-3.600" y="-13.200" width="7.200" height="26.400" rx="1.200"></rect><rect x="-3.600" y="-13.200" width="7.200" height="26.400" rx="1.200" transform="rotate(60)"></rect><rect x="-3.600" y="-13.200" width="7.200" height="26.400" rx="1.200" transform="rotate(120)"></rect></g><circle r="4.200" fill="#3c3f41"></circle></svg>
<div class="a" style="left:888px;top:28px;width:24px;height:4px;background:#afb1b3"></div>

<!-- left strip -->
<div class="a" style="left:0;top:283px;width:30px;height:149px;background:#2d2f30"></div>
<div class="vt" style="top:221px"><span style="letter-spacing: 0.759px;">Resource Manager</span></div>
<div class="vt" style="top:377px;color:#ffffff;font-weight:bold"><span style="color: rgb(255, 255, 255); letter-spacing: -0.127px;">Project</span></div>
<div class="vt" style="top:1274px"><span style="letter-spacing: 0.717px;">Bookmarks</span></div>
<div class="vt" style="top:1499px"><span style="letter-spacing: 0.781px;">Build Variants</span></div>
<svg class="a" style="left:0;top:231px" width="22" height="23" viewBox="0 0 22 23"><path d="M11 0l7 11H4z" fill="#afb1b3"></path><rect x="-2" y="13" width="10" height="10" fill="#afb1b3"></rect><circle cx="16.500" cy="18" r="5" fill="#afb1b3"></circle></svg>
<svg class="a" style="left:0;top:390px" width="22" height="18" viewBox="0 0 22 18"><path d="M-4 0h12l3 4h11v14h-26z" fill="#c4c6c8"></path></svg>
<svg class="a" style="left:0;top:1286px" width="22" height="23" viewBox="0 0 22 23"><path d="M2 0H20V22L11 14L2 22z" fill="#afb1b3"></path></svg>
<svg class="a" style="left:0;top:1511px" width="24" height="18" viewBox="0 0 24 18"><path d="M-1 17A11.800 12 0 0 1 22.500 17z" fill="#afb1b3"></path><path d="M3.300 1.300L6 6.800M18.800 1.300L15.900 6.800" stroke="#afb1b3" stroke-width="1.600"></path></svg>

<!-- tab -->
<svg class="a" style="left:944.500px;top:19px" width="31" height="23" viewBox="0 0 31 23"><path d="M0 21.6Q0 15.8 0.7 13.4Q1.4 11 2.85 8.85Q4.3 6.7 6.2 5.5Q8.1 4.3 10.3 3.9Q12.5 3.5 14.85 3.9Q17.2 4.3 18.9 5.15Q20.6 6 22.25 6.45Q23.9 6.9 25.2 6.45Q26.5 6 27.15 5.05Q27.8 4.1 27.55 3.15Q27.3 2.2 26.45 1.7Q25.6 1.2 24.75 1.45Q23.9 1.7 23.6 2.45Q23.3 3.2 22.8 3.55Q22.3 3.9 21.8 3.35Q21.3 2.8 21.75 1.8Q22.2 0.8 23.55 0.3Q24.9 -0.2 26.5 0.15Q28.1 0.5 29 1.85Q29.9 3.2 29.8 4.95Q29.7 6.7 28.6 8.3Q27.5 9.9 25.7 10.85Q23.9 11.8 23.1 12.85Q22.3 13.9 21.95 15.8Q21.6 17.7 21.5 19.65L21.4 21.6H15.6A1.6 2 0 0 0 12.4 21.6H7.7A1.95 2.400 0 0 0 3.8 21.6Z" fill="#87939a"></path><circle cx="19.9" cy="8.6" r=".75" fill="#4e5254"></circle><path d="M6.2 8.1Q7.6 11.8 9.6 11.2T13.7 9.100" stroke="#4e5254" stroke-width=".9" fill="none"></path></svg>
<svg class="a" style="left:1192px;top:22px" width="16" height="16" viewBox="0 0 16 16"><path d="M1 1l14 14M15 1l-14 14" stroke="#7f8385" stroke-width="1.800"></path></svg>
<svg class="a" style="left:3148px;top:16px" width="8" height="28" viewBox="0 0 8 28"><circle cx="4" cy="5" r="3" fill="#afb1b3"></circle><circle cx="4" cy="14" r="3" fill="#afb1b3"></circle><circle cx="4" cy="23" r="3" fill="#afb1b3"></circle></svg>

<!-- inspection widget -->
<svg class="a" style="left:3036px;top:126px" width="25" height="23" viewBox="0 0 25 23"><path d="M12.500 0l12.500 23h-25z" fill="#c09b3a"></path><rect x="10.600" y="8" width="3.800" height="7" fill="#2b2b2b"></rect><rect x="10.600" y="16.800" width="3.800" height="3.600" fill="#2b2b2b"></rect></svg>
<svg class="a" style="left:3101px;top:132px" width="19" height="11" viewBox="0 0 19 11"><path d="M1.500 10l8-8 8 8" stroke="#afb1b3" stroke-width="2.600" fill="none"></path></svg>
<svg class="a" style="left:3143px;top:133px" width="19" height="11" viewBox="0 0 19 11"><path d="M1.500 1l8 8 8-8" stroke="#afb1b3" stroke-width="2.600" fill="none"></path></svg>

<!-- run / bulb / caret -->
<svg class="a" style="left:992px;top:1112px" width="14" height="20" viewBox="0 0 14 20"><path d="M0 0l14 10-14 10z" fill="#57965c"></path></svg>
<svg class="a" style="left:1073px;top:1449.500px" width="22" height="30" viewBox="0 0 22 30"><path d="M11 .3a10.100 10.100 0 0 1 5.800 18.400v1.600H5.200v-1.600A10.100 10.100 0 0 1 11 .3z" fill="#e9a94a"></path><path d="M5.200 23.700h11.600M6 27.200h10" stroke="#c4c4c4" stroke-width="2"></path></svg>
<div class="a" style="left:1071px;top:1484px;width:4px;height:34px;background:#bbbbbb"></div>

<!-- arrow -->
<svg class="a" style="left:2680px;top:120px" width="100" height="110" viewBox="2680 120 100 110"><path d="M2765.300 126.500L2731.400 138.200L2741.200 142.400L2688.800 217.500A3.500 3.500 0 0 0 2694.500 221.800L2754.700 153.800L2760.800 162.400Z" fill="#ec3f25"></path></svg>
<div class="a" id="topline"></div><div class="a" id="topline2"></div>


</body></html>
